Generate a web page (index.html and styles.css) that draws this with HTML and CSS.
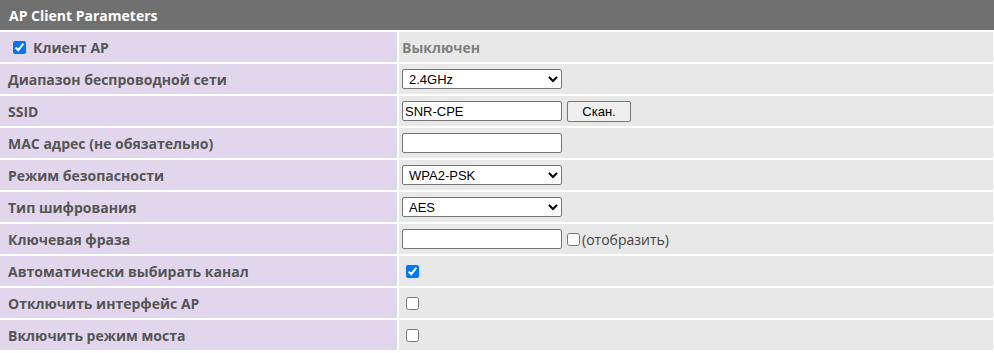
FILE: index.html
```html
<!DOCTYPE html>
<html lang="ru">

<head>
    <meta charset="UTF-8">
    <meta name="viewport" content="width=device-width, initial-scale=1.0">
    <title>AP Client Parameters</title>
    <link rel="stylesheet" href="styles.css">
</head>

<body>
    <div class="params">
        <div class="header">AP Client Parameters</div>

        <div class="label"><label class="check-label"><input type="checkbox" checked> Клиент AP</label></div>
        <div class="value"><span class="status">Выключен</span></div>

        <div class="label">Диапазон беспроводной сети</div>
        <div class="value">
            <select class="field">
                <option>2.4GHz</option>
                <option>5GHz</option>
            </select>
        </div>

        <div class="label">SSID</div>
        <div class="value">
            <input type="text" class="field" value="SNR-CPE">
            <button class="btn">Скан.</button>
        </div>

        <div class="label">MAC адрес (не обязательно)</div>
        <div class="value"><input type="text" class="field"></div>

        <div class="label">Режим безопасности</div>
        <div class="value">
            <select class="field">
                <option>WPA2-PSK</option>
            </select>
        </div>

        <div class="label">Тип шифрования</div>
        <div class="value">
            <select class="field">
                <option>AES</option>
            </select>
        </div>

        <div class="label">Ключевая фраза</div>
        <div class="value">
            <input type="password" class="field">
            <label class="show"><input type="checkbox">(отобразить)</label>
        </div>

        <div class="label">Автоматически выбирать канал</div>
        <div class="value"><input type="checkbox" checked></div>

        <div class="label">Отключить интерфейс AP</div>
        <div class="value"><input type="checkbox"></div>

        <div class="label">Включить режим моста</div>
        <div class="value"><input type="checkbox"></div>
    </div>
</body>

</html>
```

FILE: styles.css
```css
* {
    margin: 0;
    padding: 0;
    box-sizing: border-box;
}

body {
    background: white;
    font-family: "Open Sans", Arial, sans-serif;
}

.params {
    display: grid;
    grid-template-columns: 397px 594px;
    grid-auto-rows: 30px;
    gap: 2px;
}

.header {
    grid-column: 1 / 3;
    background: #707070;
    color: white;
    font-weight: bold;
    font-size: 14px;
    padding: 1px 0 0 9px;
    display: flex;
    align-items: center;
    margin-right: -1px;
}

.label {
    background: #e2d6ec;
    color: #555;
    font-weight: bold;
    font-size: 14px;
    padding: 1px 0 0 8px;
    display: flex;
    align-items: center;
}

.check-label {
    display: flex;
    align-items: center;
    gap: 7px;
    padding-left: 5px;
}

.value {
    background: #e8e8e8;
    display: flex;
    align-items: center;
    gap: 5px;
    padding-left: 3px;
    font-family: Arial, "Liberation Sans", sans-serif;
    font-size: 13px;
}

.status {
    color: #808080;
    font-weight: bold;
    font-family: "Open Sans", Arial, sans-serif;
    font-size: 14px;
    padding-top: 1px;
}

.field {
    width: 160px;
    height: 20px;
    font-family: "Liberation Sans", Arial, sans-serif;
    font-size: 13px;
    border: 1px solid #767676;
    border-radius: 2px;
    background: white;
    padding: 0 2px;
}

.btn {
    width: 64px;
    height: 21px;
    font-family: "Liberation Sans", Arial, sans-serif;
    font-size: 13px;
    border: 1px solid #767676;
    border-radius: 2px;
    background: #efefef;
}

.show {
    display: flex;
    align-items: center;
    gap: 2px;
    color: #444;
    font-family: "Open Sans", Arial, sans-serif;
    font-size: 14px;
}

input[type="checkbox"] {
    width: 13px;
    height: 13px;
    margin: 0 0 0 4px;
}

.check-label input[type="checkbox"],
.show input[type="checkbox"] {
    margin: 0;
}
```
